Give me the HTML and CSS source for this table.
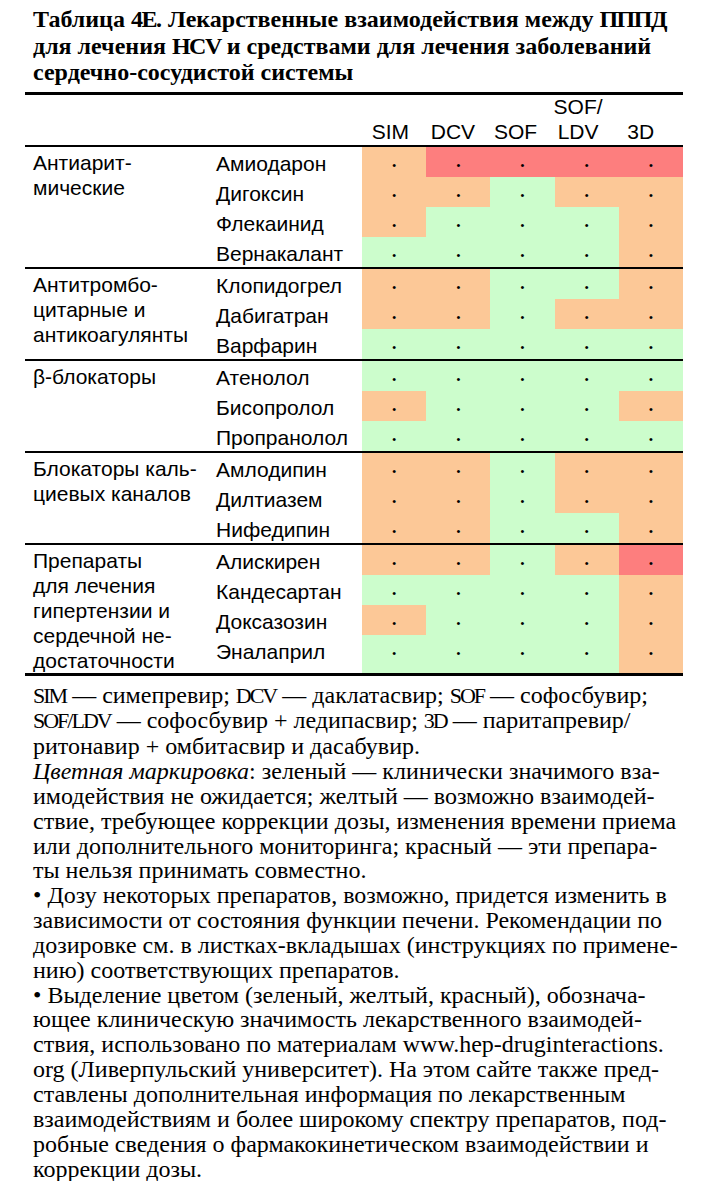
FILE: index.html
```html
<!DOCTYPE html>
<html lang="ru">
<head>
<meta charset="utf-8">
<title>Таблица 4E</title>
<link rel="stylesheet" href="styles.css">
</head>
<body>
<div class="page">
  <h1 class="title">Таблица <span class="ab">4E</span>. Лекарственные взаимодействия между <span class="ab">ПППД</span><br>для лечения <span class="ab">HCV</span> и средствами для лечения заболеваний<br>сердечно-сосудистой системы</h1>

  <div class="table">
    <div class="thead">
      <div class="hlabel"></div>
      <div class="hdrug"></div>
      <div class="hc">SIM</div>
      <div class="hc">DCV</div>
      <div class="hc">SOF</div>
      <div class="hc">SOF/<br>LDV</div>
      <div class="hc">3D</div>
    </div>

    <div class="group">
      <div class="glabel">Антиарит-<br>мические</div>
      <div class="rows">
        <div class="row"><div class="drug">Амиодарон</div><div class="c o">•</div><div class="c r">•</div><div class="c r">•</div><div class="c r">•</div><div class="c r">•</div></div>
        <div class="row"><div class="drug">Дигоксин</div><div class="c o">•</div><div class="c o">•</div><div class="c g">•</div><div class="c o">•</div><div class="c o">•</div></div>
        <div class="row"><div class="drug">Флекаинид</div><div class="c o">•</div><div class="c g">•</div><div class="c g">•</div><div class="c g">•</div><div class="c o">•</div></div>
        <div class="row"><div class="drug">Вернакалант</div><div class="c g">•</div><div class="c g">•</div><div class="c g">•</div><div class="c g">•</div><div class="c o">•</div></div>
      </div>
    </div>

    <div class="group">
      <div class="glabel">Антитромбо-<br>цитарные и<br>антикоагулянты</div>
      <div class="rows">
        <div class="row"><div class="drug">Клопидогрел</div><div class="c o">•</div><div class="c o">•</div><div class="c g">•</div><div class="c g">•</div><div class="c o">•</div></div>
        <div class="row"><div class="drug">Дабигатран</div><div class="c o">•</div><div class="c o">•</div><div class="c g">•</div><div class="c o">•</div><div class="c o">•</div></div>
        <div class="row"><div class="drug">Варфарин</div><div class="c g">•</div><div class="c g">•</div><div class="c g">•</div><div class="c g">•</div><div class="c g">•</div></div>
      </div>
    </div>

    <div class="group">
      <div class="glabel">β-блокаторы</div>
      <div class="rows">
        <div class="row"><div class="drug">Атенолол</div><div class="c g">•</div><div class="c g">•</div><div class="c g">•</div><div class="c g">•</div><div class="c g">•</div></div>
        <div class="row"><div class="drug">Бисопролол</div><div class="c o">•</div><div class="c g">•</div><div class="c g">•</div><div class="c g">•</div><div class="c o">•</div></div>
        <div class="row"><div class="drug">Пропранолол</div><div class="c g">•</div><div class="c g">•</div><div class="c g">•</div><div class="c g">•</div><div class="c g">•</div></div>
      </div>
    </div>

    <div class="group">
      <div class="glabel">Блокаторы каль-<br>циевых каналов</div>
      <div class="rows">
        <div class="row"><div class="drug">Амлодипин</div><div class="c o">•</div><div class="c o">•</div><div class="c g">•</div><div class="c o">•</div><div class="c o">•</div></div>
        <div class="row"><div class="drug">Дилтиазем</div><div class="c o">•</div><div class="c o">•</div><div class="c g">•</div><div class="c o">•</div><div class="c o">•</div></div>
        <div class="row"><div class="drug">Нифедипин</div><div class="c o">•</div><div class="c o">•</div><div class="c g">•</div><div class="c g">•</div><div class="c o">•</div></div>
      </div>
    </div>

    <div class="group last">
      <div class="glabel">Препараты<br>для лечения<br>гипертензии и<br>сердечной не-<br>достаточности</div>
      <div class="rows">
        <div class="row"><div class="drug">Алискирен</div><div class="c o">•</div><div class="c o">•</div><div class="c g">•</div><div class="c o">•</div><div class="c r">•</div></div>
        <div class="row"><div class="drug">Кандесартан</div><div class="c g">•</div><div class="c g">•</div><div class="c g">•</div><div class="c g">•</div><div class="c o">•</div></div>
        <div class="row"><div class="drug">Доксазозин</div><div class="c o">•</div><div class="c g">•</div><div class="c g">•</div><div class="c g">•</div><div class="c o">•</div></div>
        <div class="row"><div class="drug">Эналаприл</div><div class="c g">•</div><div class="c g">•</div><div class="c g">•</div><div class="c g">•</div><div class="c o">•</div></div>
      </div>
    </div>
  </div>

  <div class="notes"><span class="ab">SIM</span> — симепревир; <span class="ab">DCV</span> — даклатасвир; <span class="ab">SOF</span> — софосбувир;<br><span class="ab">SOF/LDV</span> — софосбувир + ледипасвир; <span class="ab">3D</span> — паритапревир/<br>ритонавир + омбитасвир и дасабувир.<br><em>Цветная маркировка</em>: зеленый — клинически значимого вза-<br>имодействия не ожидается; желтый — возможно взаимодей-<br>ствие, требующее коррекции дозы, изменения времени приема<br>или дополнительного мониторинга; красный — эти препара-<br>ты нельзя принимать совместно.<br>• Дозу некоторых препаратов, возможно, придется изменить в<br>зависимости от состояния функции печени. Рекомендации по<br>дозировке см. в листках-вкладышах (инструкциях по примене-<br>нию) соответствующих препаратов.<br>• Выделение цветом (зеленый, желтый, красный), обознача-<br>ющее клиническую значимость лекарственного взаимодей-<br>ствия, использовано по материалам www.hep-druginteractions.<br>org (Ливерпульский университет). На этом сайте также пред-<br>ставлены дополнительная информация по лекарственным<br>взаимодействиям и более широкому спектру препаратов, под-<br>робные сведения о фармакокинетическом взаимодействии и<br>коррекции дозы.</div>
</div>
</body>
</html>
```

FILE: styles.css
```css
html, body {
  margin: 0;
  padding: 0;
  background: #ffffff;
  color: #000000;
}

.page {
  width: 708px;
  padding: 0 25px;
  box-sizing: border-box;
}

.title {
  margin: 0 0 6px 0;
  padding: 6px 0 0 8px;
  font-family: "Liberation Serif", "Times New Roman", serif;
  font-weight: bold;
  font-size: 24px;
  line-height: 26.5px;
  white-space: nowrap;
}
.title .ab { letter-spacing: -1.5px; }

.table {
  border-top: 3px solid #000;
  border-bottom: 3px solid #000;
  font-family: "Liberation Sans", Arial, sans-serif;
  font-size: 21px;
}

.thead {
  display: flex;
  align-items: flex-end;
  height: 52px;
  border-bottom: 2px solid #000;
  line-height: 25px;
  padding-bottom: 1px;
  box-sizing: border-box;
}

.hlabel { width: 187px; }
.hdrug { width: 150px; }
.hc {
  flex: 1;
  text-align: center;
  padding-right: 6px;
}
.hc:last-child { padding-right: 14px; }

.group {
  display: flex;
  border-bottom: 2px solid #000;
}
.group.last { border-bottom: 0; }

.glabel {
  width: 179px;
  padding: 3px 0 0 8px;
  line-height: 25px;
  white-space: nowrap;
}

.rows {
  flex: 1;
  display: flex;
  flex-direction: column;
}

.row {
  display: flex;
  min-height: 30px;
}
.row:last-child { flex-grow: 1; }

.drug {
  width: 146px;
  padding: 3px 0 0 4px;
  line-height: 27px;
  white-space: nowrap;
}

.c {
  flex: 1;
  text-align: center;
  font-size: 11px;
  padding-top: 6px;
  line-height: 24px;
}

.o { background: #fcc897; }
.r { background: #fd7e7e; }
.g { background: #ccfdcc; }

.notes {
  margin-top: 7px;
  padding-left: 8px;
  font-family: "Liberation Serif", "Times New Roman", serif;
  font-size: 24px;
  line-height: 24.85px;
  white-space: nowrap;
}
.notes .ab {
  font-size: 22px;
  letter-spacing: -2px;
}
```
